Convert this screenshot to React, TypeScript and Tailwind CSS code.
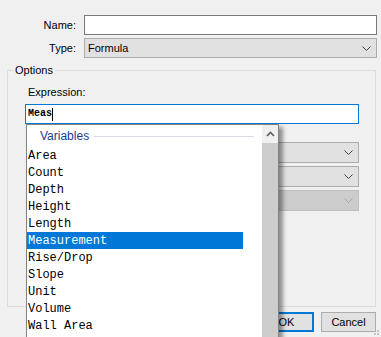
import React from "react";

function Chevron({ color = "#404040" }: { color?: string }) {
  return (
    <svg width="9" height="5" viewBox="0 0 9 5" className="block">
      <path d="M0.5 0.5 L4.5 4.5 L8.5 0.5" fill="none" stroke={color} strokeWidth="1" />
    </svg>
  );
}

export default function App() {
  const items = [
    "Area",
    "Count",
    "Depth",
    "Height",
    "Length",
    "Measurement",
    "Rise/Drop",
    "Slope",
    "Unit",
    "Volume",
    "Wall Area",
  ];
  return (
    <div className="relative w-[381px] h-[337px] overflow-hidden bg-[#f0f0f0] text-[11px] leading-[13px] text-black font-['Liberation_Sans',Arial,sans-serif]">
      <div className="flex flex-col pt-[15px]">
        <div className="flex items-center h-[20px]">
          <div className="w-[76px] text-right">Name:</div>
          <div className="ml-[8px] w-[293px] h-[20px] bg-white border border-[#7a7a7a]" />
        </div>
        <div className="flex items-center h-[20px] mt-[3px]">
          <div className="w-[76px] text-right">Type:</div>
          <div className="ml-[8px] w-[293px] h-[20px] bg-[#e1e1e1] border border-[#adadad] flex items-center justify-between pl-[3px] pr-[5px]">
            <span>Formula</span>
            <Chevron />
          </div>
        </div>

        <div className="ml-[7px] mt-[12px] w-[369px] h-[237px] border border-[#dcdcdc] flex flex-col">
          <div className="-mt-[7px] ml-[5px] px-[2px] bg-[#f0f0f0] w-fit">Options</div>
          <div className="ml-[20px] mt-[9px]">Expression:</div>
          <div className="ml-[17px] mt-[5px] w-[334px] h-[20px] bg-white border border-[#0078d7] flex items-center pl-[2px]">
            <span className="font-['Liberation_Mono',monospace] font-bold text-[10px] leading-[12px]">Meas</span>
            <span className="w-[1px] h-[13px] bg-black" />
          </div>
          <div className="ml-[142px] mt-[18px] flex flex-col gap-[3px]">
            <div className="w-[209px] h-[21px] bg-[#e1e1e1] border border-[#adadad] flex items-center justify-end pr-[5px]">
              <Chevron />
            </div>
            <div className="w-[209px] h-[21px] bg-[#e1e1e1] border border-[#adadad] flex items-center justify-end pr-[5px]">
              <Chevron />
            </div>
            <div className="w-[209px] h-[21px] bg-[#cccccc] border border-[#bfbfbf] flex items-center justify-end pr-[5px]">
              <Chevron color="#a8a8a8" />
            </div>
          </div>
        </div>

        <div className="flex justify-end gap-[7px] pr-[5px] mt-[5px]">
          <div className="w-[55px] h-[20px] bg-[#e1e1e1] border-2 border-[#0078d7] flex items-center justify-center">OK</div>
          <div className="w-[55px] h-[20px] bg-[#e1e1e1] border border-[#adadad] flex items-center justify-center">Cancel</div>
        </div>
      </div>

      <div className="absolute right-[2px] bottom-[2px] flex flex-col items-end gap-[1px]">
        <div className="w-[2px] h-[2px] bg-[#c4c4c4]" />
        <div className="flex gap-[1px]">
          <div className="w-[2px] h-[2px] bg-[#c4c4c4]" />
          <div className="w-[2px] h-[2px] bg-[#c4c4c4]" />
        </div>
      </div>

      <div className="absolute left-[26px] top-[124px] w-[253px] h-[230px] bg-white border border-[#828282] shadow-[4px_3px_4px_rgba(0,0,0,0.4)] flex">
        <div className="flex flex-col w-[235px]">
          <div className="h-[22px] flex items-center pl-[13px]">
            <span className="text-[#1c3a94] text-[12px]">Variables</span>
            <span className="ml-[5px] w-[160px] h-[1px] bg-[#d6dbe6]" />
          </div>
          {items.map((it) => (
            <div
              key={it}
              className={
                it === "Measurement"
                  ? "w-[216px] h-[17px] leading-[16px] pt-[1px] pl-[1px] bg-[#0078d7] text-white font-['Liberation_Mono',monospace] text-[12px]"
                  : "w-[216px] h-[17px] leading-[16px] pt-[1px] pl-[1px] text-black font-['Liberation_Mono',monospace] text-[12px]"
              }
            >
              {it}
            </div>
          ))}
        </div>
        <div className="w-[16px] flex flex-col">
          <div className="h-[18px] bg-[#f0f0f0] flex items-center justify-center">
            <svg width="9" height="6" viewBox="0 0 9 6">
              <path d="M1 5 L4.5 1.5 L8 5" fill="none" stroke="#606060" strokeWidth="1.7" />
            </svg>
          </div>
          <div className="flex-1 bg-[#cdcdcd]" />
        </div>
      </div>
    </div>
  );
}
